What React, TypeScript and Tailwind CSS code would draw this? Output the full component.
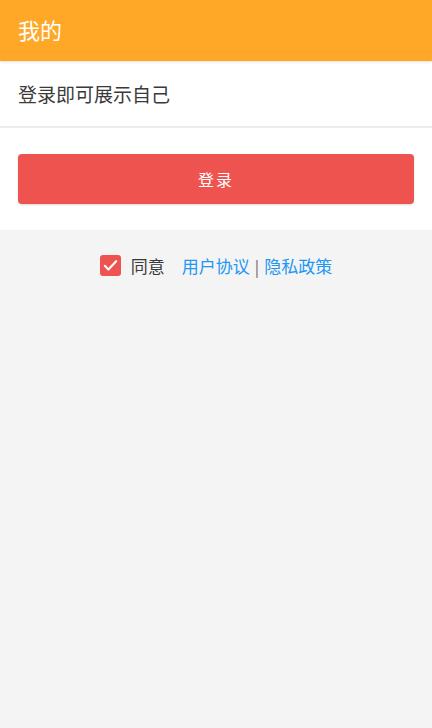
import React from "react";

export default function App() {
  const font = { fontFamily: '"Noto Sans CJK SC", "Noto Sans", sans-serif' };
  return (
    <div className="w-[432px] h-[728px] bg-[#f4f4f4] flex flex-col" style={font}>
      <div className="h-[61px] bg-[#ffa726] flex items-center px-[18px] pb-[3px] shadow-[0_1px_3px_rgba(0,0,0,0.12)] relative z-10">
        <span className="text-white text-[22px] leading-none">我的</span>
      </div>
      <div className="bg-white flex flex-col">
        <div className="h-[67px] flex items-center px-[18px] border-b-[2px] border-[#ececec]">
          <span className="text-[#3a3a3a] text-[19px] leading-none">登录即可展示自己</span>
        </div>
        <div className="px-[18px] pt-[26px] pb-[26px]">
          <button className="w-full h-[50px] rounded-[4px] bg-[#ef5350] text-white text-[16px] tracking-[2px] shadow-[0_1px_2px_rgba(0,0,0,0.15)]">
            登录
          </button>
        </div>
      </div>
      <div className="flex items-center justify-center pt-[25px] text-[16px] leading-none">
        <span className="w-[21px] h-[21px] rounded-[3px] bg-[#ef5350] flex items-center justify-center mr-[10px]">
          <svg width="17" height="17" viewBox="0 0 24 24" fill="none" stroke="white" strokeWidth="3" strokeLinecap="round" strokeLinejoin="round">
            <path d="M4 12.5l5 5L20 6" />
          </svg>
        </span>
        <span className="text-[#3a3a3a] text-[17px]">同意</span>
        <span className="ml-[17px] text-[#2196f3] text-[17px]">用户协议</span>
        <span className="text-[#666] mx-[5px] text-[16px]">|</span>
        <span className="text-[#2196f3] text-[17px]">隐私政策</span>
      </div>
    </div>
  );
}
